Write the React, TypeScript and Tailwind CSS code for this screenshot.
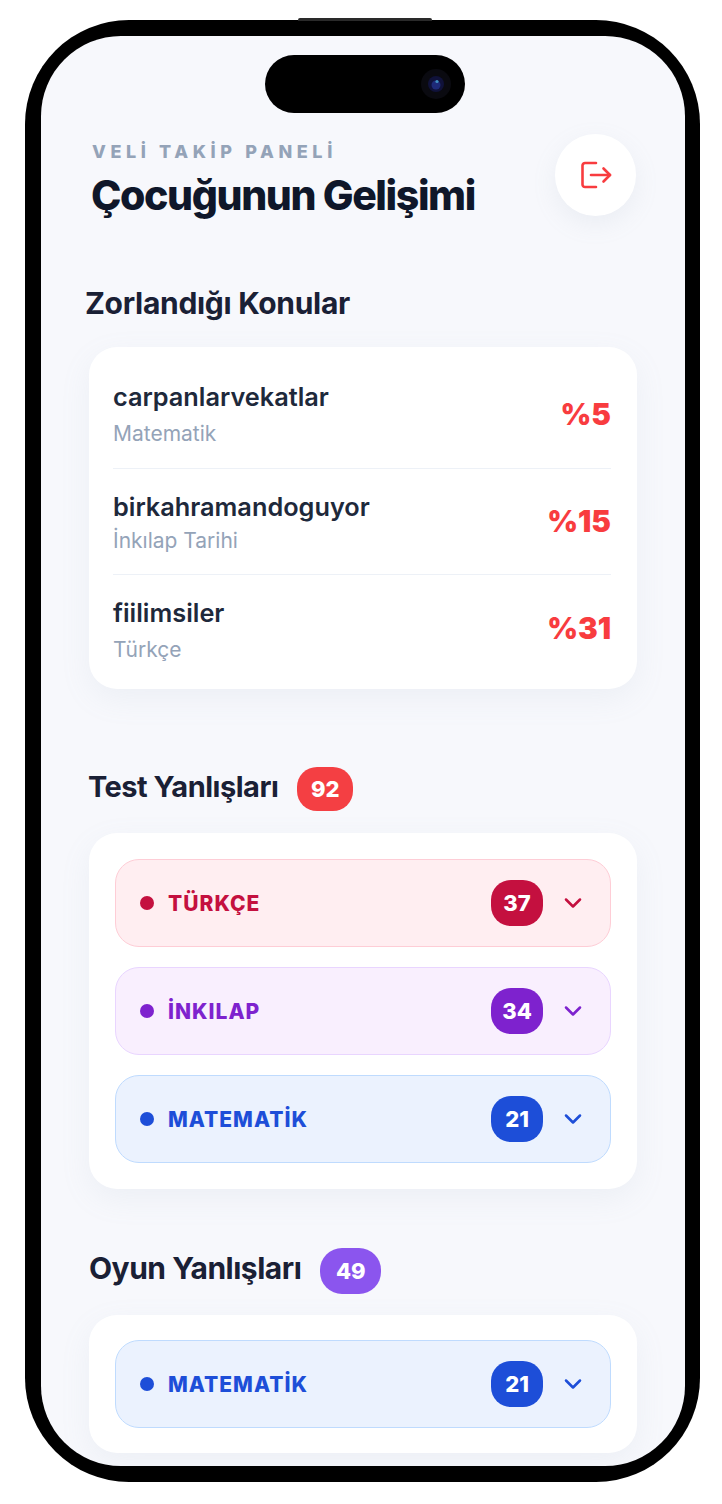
import { ChevronDown } from 'lucide-react'

const topics = [
  { name: 'carpanlarvekatlar', lesson: 'Matematik', pct: '%5', row: 'h-[122px] border-b border-[#edf1f7] pt-[13px]', gap: 'mt-[8px]', nudge: '' },
  { name: 'birkahramandoguyor', lesson: 'İnkılap Tarihi', pct: '%15', row: 'h-[106px] border-b border-[#edf1f7] pt-[2px]', gap: 'mt-[5px]', nudge: 'pb-[2px]' },
  { name: 'fiilimsiler', lesson: 'Türkçe', pct: '%31', row: 'h-[114px] pb-[4px]', gap: 'mt-[8px]', nudge: 'pb-[4px]' },
]

const styles = {
  red: {
    box: 'bg-[#ffeef1] border-[#fecdd6]',
    dot: 'bg-[#c4103f]',
    text: 'text-[#c4103f]',
  },
  purple: {
    box: 'bg-[#f9effe] border-[#e9d5ff]',
    dot: 'bg-[#7e22ce]',
    text: 'text-[#7e22ce]',
  },
  blue: {
    box: 'bg-[#ebf2fe] border-[#bfdbfe]',
    dot: 'bg-[#1d4ed8]',
    text: 'text-[#1d4ed8]',
  },
}

function LessonRow({ label, count, color }: { label: string; count: number; color: keyof typeof styles }) {
  const s = styles[color]
  return (
    <div className={`flex h-[88px] items-center rounded-[24px] border pl-[24px] pr-[23px] ${s.box}`}>
      <span className={`h-[14px] w-[14px] rounded-full ${s.dot}`} />
      <span className={`ml-[14px] pt-[2px] text-[21px] font-extrabold tracking-[1px] ${s.text}`}>{label}</span>
      <span className={`ml-auto flex h-[46px] w-[52px] items-center justify-center rounded-[20px] text-[22px] font-extrabold text-white ${s.dot}`}>
        {count}
      </span>
      <ChevronDown className={`ml-[16px] h-[28px] w-[28px] ${s.text}`} strokeWidth={2.2} />
    </div>
  )
}

export default function App() {
  return (
    <div className="h-[1504px] w-[722px] overflow-hidden bg-white pl-[25px] pt-[20px] font-['Inter',sans-serif]">
      <div className="relative h-[1462px] w-[675px] rounded-[104px] bg-black px-[16px] py-[16px]">
        <span className="absolute left-[273px] top-[-2px] h-[3px] w-[134px] rounded-t-[2px] bg-[#2a2a2a]" />
        <div className="relative h-[1430px] w-[644px] overflow-hidden rounded-[80px] bg-[#f7f8fc]">
          <div className="absolute left-[224px] top-[19px] flex h-[58px] w-[200px] items-center justify-end rounded-[29px] bg-black pr-[13px]">
            <svg width="32" height="32" viewBox="0 0 32 32">
              <circle cx="16" cy="16" r="15" fill="#0a0a10" />
              <circle cx="16" cy="16" r="8" fill="#10123a" />
              <circle cx="16" cy="17" r="4.5" fill="#1e2a78" />
              <circle cx="17" cy="13.5" r="1.6" fill="#3f8fc0" />
            </svg>
          </div>

          <header className="flex pl-[50px] pr-[49px] pt-[98px]">
            <div className="flex-1">
              <p className="pl-[1px] pt-[6px] text-[18px] font-extrabold leading-[24px] tracking-[4.6px] text-[#94a3b8]">VELİ TAKİP PANELİ</p>
              <h1 className="mt-[8px] text-[41px] font-extrabold leading-[46px] tracking-[-1.4px] text-[#0f172a]">Çocuğunun Gelişimi</h1>
            </div>
            <button className="flex h-[82px] w-[81px] items-center justify-center rounded-full bg-white shadow-[0_8px_24px_rgba(148,163,184,0.12)]">
              <svg width="32" height="28" viewBox="0 0 32 28" fill="none" stroke="#f83c3f" strokeWidth="2.6" strokeLinecap="round" strokeLinejoin="round">
                <path d="M16 2H5a2.5 2.5 0 0 0-2.5 2.5v19A2.5 2.5 0 0 0 5 26h11" />
                <path d="M11 14h19" />
                <path d="M23.5 7.5 30 14l-6.5 6.5" />
              </svg>
            </button>
          </header>

          <section className="px-[48px]">
            <h2 className="-ml-[4px] mt-[67px] text-[30px] font-bold leading-[36px] tracking-[-0.3px] text-[#1a2035]">Zorlandığı Konular</h2>
            <div className="mt-[26px] rounded-[28px] bg-white pl-[24px] pr-[26px] shadow-[0_10px_30px_rgba(148,163,184,0.1)]">
              {topics.map((t) => (
                <div key={t.name} className={`flex items-center justify-between ${t.row}`}>
                  <div>
                    <p className="text-[25.3px] font-semibold leading-[32px] text-[#1e293b]">{t.name}</p>
                    <p className={`text-[21px] leading-[26px] text-[#94a3b8] ${t.gap}`}>{t.lesson}</p>
                  </div>
                  <span className={`text-[29.5px] font-black text-[#f83c3f] ${t.nudge}`}>{t.pct}</span>
                </div>
              ))}
            </div>

            <div className="mt-[78px] flex h-[44px] items-center">
              <h2 className="-ml-[1px] -mt-[4px] text-[29px] font-bold tracking-[-0.5px] text-[#1a2035]">Test Yanlışları</h2>
              <span className="ml-[19px] flex h-[44px] w-[56px] items-center justify-center rounded-[20px] bg-[#f43f43] text-[22px] font-extrabold text-white">92</span>
            </div>
            <div className="mt-[22px] flex flex-col gap-[20px] rounded-[28px] bg-white px-[26px] py-[26px] shadow-[0_10px_30px_rgba(148,163,184,0.1)]">
              <LessonRow label="TÜRKÇE" count={37} color="red" />
              <LessonRow label="İNKILAP" count={34} color="purple" />
              <LessonRow label="MATEMATİK" count={21} color="blue" />
            </div>

            <div className="mt-[59px] flex h-[46px] items-center">
              <h2 className="-mt-[6px] text-[30px] font-bold tracking-[-0.5px] text-[#1a2035]">Oyun Yanlışları</h2>
              <span className="ml-[19px] flex h-[46px] w-[61px] items-center justify-center rounded-[22px] bg-[#8b55ee] text-[22px] font-extrabold text-white">49</span>
            </div>
            <div className="mt-[21px] rounded-[28px] bg-white px-[26px] py-[25px] shadow-[0_10px_30px_rgba(148,163,184,0.1)]">
              <LessonRow label="MATEMATİK" count={21} color="blue" />
            </div>
          </section>
        </div>
      </div>
    </div>
  )
}
